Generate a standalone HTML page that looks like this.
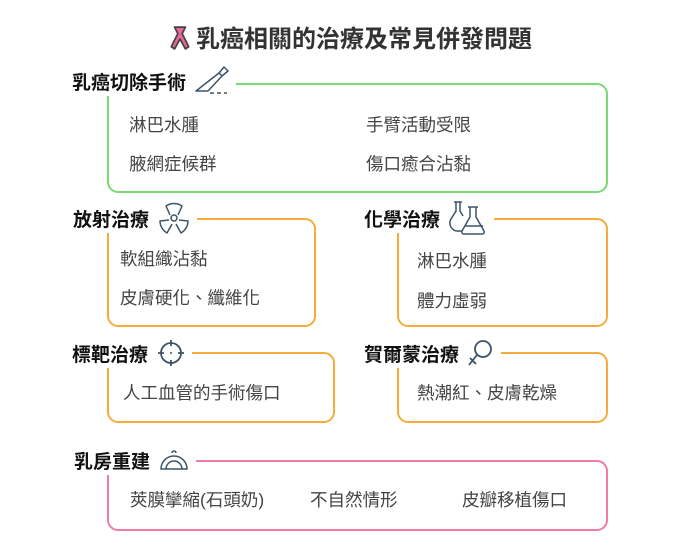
<!DOCTYPE html>
<html><head><meta charset="utf-8"><style>
body{margin:0;width:700px;height:560px;background:#fff;position:relative;overflow:hidden;font-family:"Liberation Sans","Noto Sans CJK TC",sans-serif;}
.box{position:absolute;border:2px solid;border-radius:11px;box-sizing:border-box;}
.g{border-color:#79da73}.o{border-color:#f5ac3c}.p{border-color:#f07ba6}
.h{position:absolute;background:#fff;font-size:19px;font-weight:bold;color:#111;display:flex;align-items:center;height:30px;padding-right:6px;white-space:nowrap}
.h svg{margin-left:8px}
.t{position:absolute;font-size:17.5px;color:#444;white-space:nowrap;line-height:22px}
</style></head><body>
<div style="position:absolute;left:0;width:700px;top:24px;text-align:center;font-size:24px;font-weight:bold;color:#333;line-height:28px">
<svg width="24" height="28" viewBox="0 0 22 24" style="vertical-align:-5px;margin-right:4px"><path d="M6 2h10l-3 6 6 12-3 2-5-9-5 9-3-2 6-12z" fill="#e8679a" stroke="#444" stroke-width="1.6" stroke-linejoin="round"/></svg>乳癌相關的治療及常見併發問題</div>

<div class="box g" style="left:107px;top:83px;width:501px;height:110px"></div>
<div class="h" style="left:72px;top:66px">乳癌切除手術<svg width="36" height="32" viewBox="0 0 36 32"><path d="M30 2l4 4-6 5-3-3zM25 8l3 3-14 15H2z" fill="none" stroke="#3d5468" stroke-width="1.5" stroke-linejoin="round"/><path d="M16 28h4M23 28h4M30 28h3" stroke="#3d5468" stroke-width="1.5"/></svg></div>
<div class="t" style="left:129px;top:114px">淋巴水腫</div>
<div class="t" style="left:366px;top:114px">手臂活動受限</div>
<div class="t" style="left:129px;top:153px">腋網症候群</div>
<div class="t" style="left:366px;top:153px">傷口癒合沾黏</div>

<div class="box o" style="left:107px;top:218px;width:209px;height:109px"></div>
<div class="h" style="left:73px;top:203px">放射治療<svg width="34" height="34" viewBox="0 0 34 34"><circle cx="17" cy="17" r="3" fill="none" stroke="#3d5468" stroke-width="1.5"/><path d="M13 14L9 5a14 14 0 0 1 16 0l-4 9M12 19l-9 1a14 14 0 0 0 7 12l5-9M22 19l9 1a14 14 0 0 1-7 12l-5-9" fill="none" stroke="#3d5468" stroke-width="1.5" stroke-linejoin="round"/></svg></div>
<div class="t" style="left:120px;top:248px">軟組織沾黏</div>
<div class="t" style="left:120px;top:287px">皮膚硬化、纖維化</div>

<div class="box o" style="left:397px;top:218px;width:211px;height:109px"></div>
<div class="h" style="left:364px;top:203px">化學治療<svg width="40" height="36" viewBox="0 0 40 36"><path d="M6 2h8M8 2v9L3 19a8 8 0 0 0 8 12h3M12 2v9l3 5" fill="none" stroke="#3d5468" stroke-width="1.5"/><path d="M20 7h10M22 7v10l-8 14a2 2 0 0 0 2 3h18a2 2 0 0 0 2-3L28 17V7" fill="none" stroke="#3d5468" stroke-width="1.5" stroke-linejoin="round"/><path d="M17 26h18" stroke="#3d5468" stroke-width="1.5"/></svg></div>
<div class="t" style="left:417px;top:250px">淋巴水腫</div>
<div class="t" style="left:417px;top:290px">體力虛弱</div>

<div class="box o" style="left:107px;top:352px;width:228px;height:71px"></div>
<div class="h" style="left:72px;top:338px">標靶治療<svg width="30" height="30" viewBox="0 0 30 30"><circle cx="15" cy="15" r="10" fill="none" stroke="#3d5468" stroke-width="1.8"/><path d="M15 2v6M15 22v6M2 15h6M22 15h6" stroke="#3d5468" stroke-width="1.8"/><circle cx="15" cy="15" r="1" fill="#3d5468"/></svg></div>
<div class="t" style="left:123px;top:382px">人工血管的手術傷口</div>

<div class="box o" style="left:397px;top:352px;width:211px;height:71px"></div>
<div class="h" style="left:364px;top:338px">賀爾蒙治療<svg width="28" height="30" viewBox="0 0 28 30"><circle cx="16" cy="11" r="8" fill="none" stroke="#3d5468" stroke-width="1.8"/><path d="M10 17L2 27M3 20l6 6" stroke="#3d5468" stroke-width="1.8"/></svg></div>
<div class="t" style="left:417px;top:382px">熱潮紅、皮膚乾燥</div>

<div class="box p" style="left:107px;top:460px;width:501px;height:71px"></div>
<div class="h" style="left:74px;top:445px">乳房重建<svg width="32" height="26" viewBox="0 0 32 26"><path d="M3 22a13 13 0 0 1 26 0zM8 22a8 8 0 0 1 16 0M14 6a2 2 0 0 1 4 0" fill="none" stroke="#3d5468" stroke-width="1.5"/></svg></div>
<div class="t" style="left:130px;top:489px">莢膜攣縮(石頭奶)</div>
<div class="t" style="left:310px;top:489px">不自然情形</div>
<div class="t" style="left:462px;top:489px">皮瓣移植傷口</div>
</body></html>
